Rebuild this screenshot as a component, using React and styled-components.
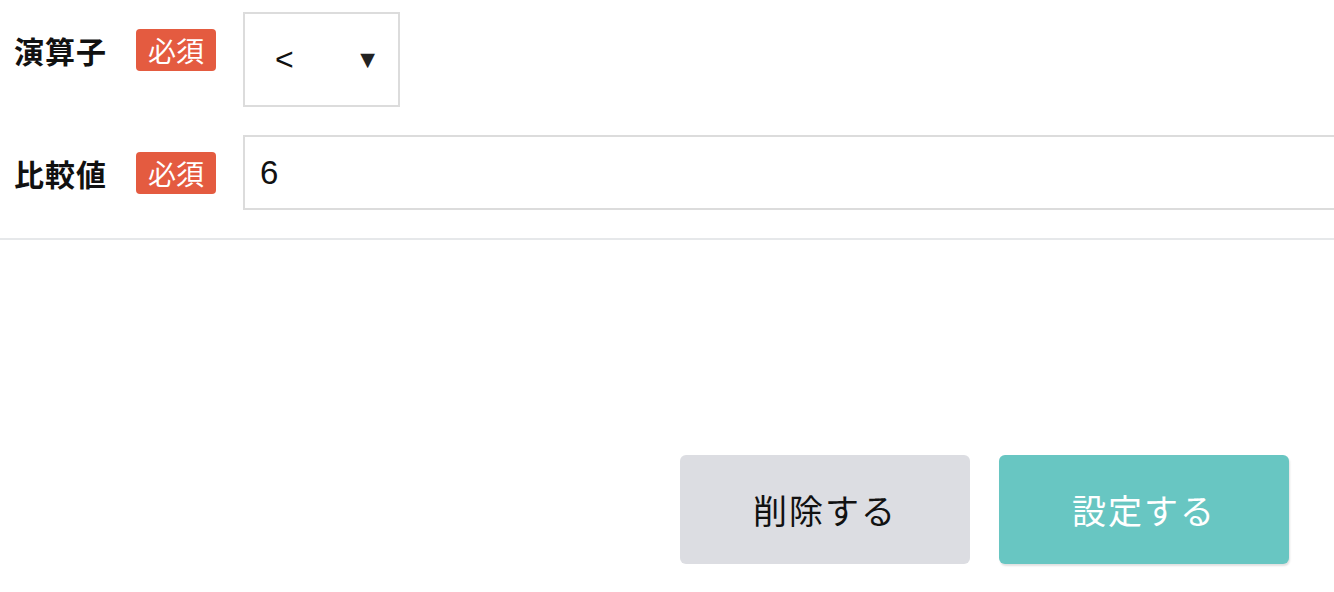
import styled, { createGlobalStyle } from 'styled-components';

const GlobalStyle = createGlobalStyle`
  html, body {
    margin: 0;
    padding: 0;
    background: #ffffff;
    overflow: hidden;
  }
  body {
    font-family: "Liberation Sans", "Noto Sans CJK JP", sans-serif;
    color: #111;
  }
`;

const Page = styled.div`
  width: 1334px;
  height: 592px;
  display: flex;
  flex-direction: column;
`;

const Form = styled.div`
  display: flex;
  flex-direction: column;
  gap: 28px;
  padding: 12px 0 28px 14px;
  border-bottom: 2px solid #e6e8ea;
`;

const Row = styled.div`
  display: flex;
  align-items: flex-start;
`;

const LabelCell = styled.div`
  width: 229px;
  height: 75px;
  flex-shrink: 0;
  display: flex;
  align-items: center;
  gap: 28px;
`;

const Label = styled.span`
  font-family: "Noto Sans CJK JP", sans-serif;
  font-size: 30px;
  font-weight: 700;
  letter-spacing: 1px;
  width: 94px;
`;

const Required = styled.span`
  font-family: "Noto Sans CJK JP", sans-serif;
  background: #e45b40;
  color: #fff;
  font-size: 28px;
  line-height: 42px;
  height: 42px;
  padding: 0 12px;
  border-radius: 4px;
`;

const SelectBox = styled.div`
  width: 157px;
  height: 95px;
  box-sizing: border-box;
  border: 2px solid #dcdcdc;
  display: flex;
  align-items: center;
  justify-content: space-between;
  padding: 0 18px 0 30px;
  font-size: 32px;
`;

const Arrow = styled.span`
  font-size: 25px;
  color: #222;
`;

const TextInput = styled.div`
  flex: 1;
  margin-right: -20px;
  height: 75px;
  box-sizing: border-box;
  border: 2px solid #dcdcdc;
  display: flex;
  align-items: center;
  padding-left: 15px;
  font-size: 33px;
`;

const Footer = styled.div`
  flex: 1;
  display: flex;
  justify-content: flex-end;
  align-items: flex-end;
  gap: 29px;
  padding: 0 45px 28px 0;
`;

const Button = styled.button`
  width: 290px;
  height: 109px;
  border: none;
  border-radius: 6px;
  font-family: "Noto Sans CJK JP", sans-serif;
  font-size: 34px;
  letter-spacing: 2px;
  background: ${({ $primary }) => ($primary ? '#68c6c2' : '#dcdde2')};
  color: ${({ $primary }) => ($primary ? '#ffffff' : '#111111')};
  box-shadow: ${({ $primary }) => ($primary ? '1px 2px 2px rgba(0,0,0,0.12)' : 'none')};
`;

export default function App() {
  return (
    <Page>
      <GlobalStyle />
      <Form>
        <Row>
          <LabelCell>
            <Label>演算子</Label>
            <Required>必須</Required>
          </LabelCell>
          <SelectBox>
            <span>&lt;</span>
            <Arrow>▼</Arrow>
          </SelectBox>
        </Row>
        <Row>
          <LabelCell>
            <Label>比較値</Label>
            <Required>必須</Required>
          </LabelCell>
          <TextInput>6</TextInput>
        </Row>
      </Form>
      <Footer>
        <Button>削除する</Button>
        <Button $primary>設定する</Button>
      </Footer>
    </Page>
  );
}
